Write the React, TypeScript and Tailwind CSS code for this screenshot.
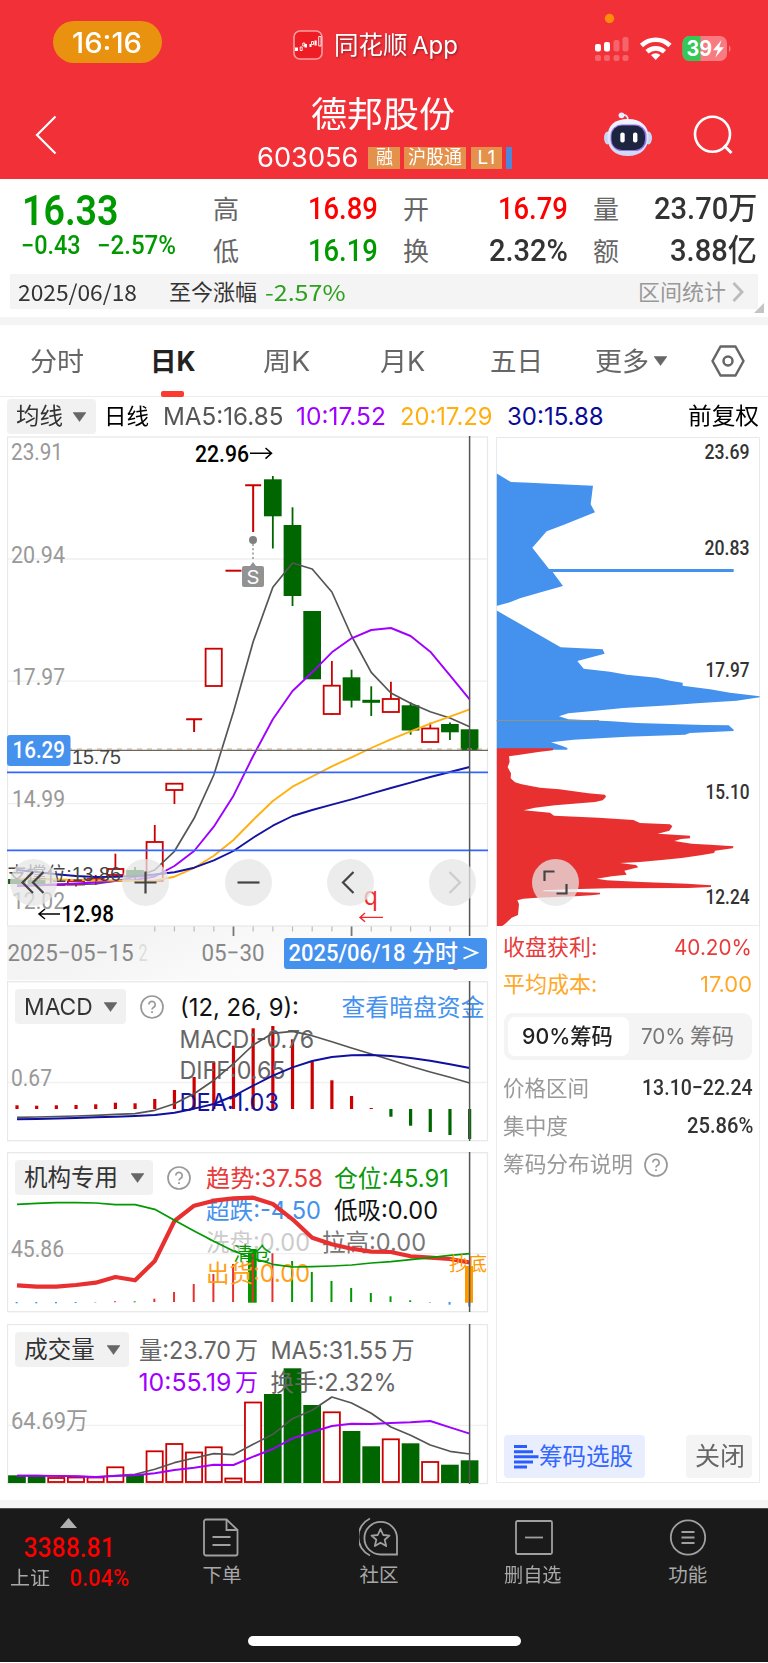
import { useLayoutEffect, useRef, useState } from "react";
import type { ReactNode } from "react";

const GREEN = "#006600";
const RED = "#cc0000";
const BLUE = "#4591ee";
const DIN = "Roboto, 'Noto Sans CJK SC', sans-serif";
const SANS = "Inter, 'Noto Sans CJK SC', sans-serif";

// Squeezes or stretches a label horizontally so it fills exactly w pixels.
const Fit = ({ w, className = "", children }: { w: number; className?: string; children: ReactNode }) => {
  const ref = useRef<HTMLSpanElement>(null);
  const [scale, setScale] = useState(1);
  useLayoutEffect(() => {
    if (ref.current) setScale(w / ref.current.offsetWidth);
  }, [w]);
  return (
    <span className={`block shrink-0 whitespace-nowrap ${className}`} style={{ width: w }}>
      <span ref={ref} className="inline-block origin-left" style={{ transform: `scaleX(${scale})` }}>
        {children}
      </span>
    </span>
  );
};

type TextProps = { x: number; y: number; w: number; size?: number; fill?: string; font?: string; weight?: number; children: string };

const T = ({ x, y, w, size = 24, fill = "#999", font = DIN, weight = 400, children }: TextProps) => (
  <text x={x} y={y} textLength={w} lengthAdjust="spacingAndGlyphs" fontSize={size} fill={fill} fontFamily={font} fontWeight={weight}>
    {children}
  </text>
);

const cx = (i: number) => 17 + 19.68 * i;

const Line = ({ data, color, width = 1.7 }: { data: number[]; color: string; width?: number }) => (
  <polyline points={data.map((y, i) => `${cx(i)},${y}`).join(" ")} fill="none" stroke={color} strokeWidth={width} strokeLinejoin="round" />
);

const Caret = ({ className = "" }: { className?: string }) => (
  <svg viewBox="0 0 13 10" className={`h-[10px] w-[13px] shrink-0 ${className}`}>
    <path d="M0 .5h13L6.500 9.500z" fill="#666" stroke="#666" strokeWidth=".5" strokeLinejoin="round" />
  </svg>
);

const Help = ({ className = "" }: { className?: string }) => (
  <svg viewBox="0 0 24 24" className={`size-6 shrink-0 ${className}`} fill="none" stroke="#999" strokeWidth="1.700">
    <circle cx="12" cy="12" r="11" />
    <path d="M8.800 9.600a3.200 3.200 0 1 1 4.900 2.700c-1.100.7-1.700 1.200-1.700 2.300" />
    <path d="M12 16.300v1.800" strokeWidth="1.800" />
  </svg>
);

// [type, bodyTop, bodyBottom, wickTop, wickBottom]
const candles: [string, number, number, number, number][] = [
  ["g", 879, 884, 879, 884],
  ["g", 879, 884, 878, 885],
  ["r", 884.5, 885, 884, 886],
  ["r", 881, 884.5, 880, 886.5],
  ["r", 879, 880.5, 875, 885],
  ["r", 869, 875, 853.7, 875],
  ["g", 870, 877.5, 867, 880],
  ["r", 842, 881, 825, 881],
  ["r", 783.7, 790, 783, 804],
  ["t", 719.3, 719.3, 719.3, 732],
  ["r", 648.7, 686, 648, 686],
  ["t", 570.7, 570.7, 570.7, 570.7],
  ["t", 485.2, 485.2, 485.2, 532],
  ["g", 479.3, 516.3, 476, 548.5],
  ["g", 525, 596, 507.3, 606],
  ["g", 611, 679.3, 611, 679],
  ["r", 685.7, 714, 661, 715],
  ["g", 677.3, 700.7, 669.7, 707.5],
  ["g", 699.8, 702.8, 686.3, 716],
  ["r", 699, 712, 681.7, 712],
  ["g", 705.3, 730.5, 702.3, 734.7],
  ["r", 728.5, 742, 722.7, 742],
  ["g", 724, 732.3, 722.5, 740],
  ["g", 729.3, 750.3, 729.3, 750.3],
];

const ma5 = [885, 885, 885, 884.5, 884, 881, 877, 870, 851.3, 818.3, 775, 711.7, 641.7, 587.3, 563, 569, 592, 636, 672.3, 693, 703.3, 711.7, 718, 726.7];
const ma10 = [886, 885.5, 884.5, 883.5, 882.5, 881, 880, 876.5, 866, 851, 826.7, 795.7, 756, 719.3, 691, 672.3, 652.3, 638.3, 630, 628, 636, 651.7, 675.3, 699.3];
const ma20 = [878.7, 879, 879.5, 880, 880.3, 880.5, 881, 880.5, 876.7, 868, 855.7, 840, 820, 801, 786.7, 776.5, 766.3, 757.3, 748, 739.3, 731.3, 723.7, 716.7, 709.3];
const ma30 = [870, 872, 874.3, 876, 877, 876.8, 876, 874.5, 872.3, 867.7, 860.3, 851, 837.7, 825.7, 816, 810, 804.7, 799.3, 793.7, 788, 782.7, 777, 772, 767];

const macd = [1105.3, 1105.7, 1105.3, 1105, 1104.3, 1102.7, 1103.3, 1099, 1090, 1077, 1062.3, 1045.7, 1028.3, 1026, 1039.3, 1061.7, 1080.3, 1096, 1108, 1116.7, 1125.7, 1132, 1135, 1139];
const diff = [1117.3, 1117, 1116.5, 1116, 1115.3, 1114.3, 1113.7, 1110.3, 1103.7, 1093.7, 1080.3, 1063.7, 1045, 1033.3, 1031.3, 1035.7, 1041.7, 1048, 1054, 1060, 1066.3, 1072, 1077.3, 1083];
const dea = [1119.3, 1119, 1118.5, 1118, 1117.3, 1116.7, 1116, 1115, 1112.7, 1108.7, 1104, 1096, 1085.7, 1075.7, 1067.3, 1061, 1057, 1055.3, 1055, 1056, 1058, 1060.7, 1064.3, 1068];

const trend = [1285.3, 1286.7, 1286.7, 1285, 1282.7, 1277, 1280.3, 1261, 1221, 1205.7, 1200.7, 1198.3, 1197.7, 1204, 1219.3, 1237.7, 1244.3, 1248.7, 1251.7, 1252, 1256.3, 1257.7, 1259, 1262.5];
const position = [1204.3, 1203.3, 1202.7, 1202.7, 1203, 1204.7, 1204.7, 1209.3, 1220.3, 1231, 1241.3, 1251, 1258.3, 1264.3, 1267, 1266.7, 1266, 1265, 1263, 1261.7, 1259.7, 1257.7, 1255.3, 1253.7];
// [color, y1, y2]
const flows: [string, number, number][] = [
  [BLUE, 1302, 1303.3], [BLUE, 1302, 1303.3], [BLUE, 1302, 1303.3], [BLUE, 1302, 1303], [BLUE, 1302, 1302.5],
  ["#e83030", 1301.3, 1302.3], ["#009900", 1301.3, 1302.3], ["#e83030", 1298.7, 1302], ["#e83030", 1292, 1302],
  ["#e83030", 1284, 1302], ["#e83030", 1274, 1302], ["#e83030", 1264, 1302], ["#e83030", 1254, 1302], ["#e83030", 1253.3, 1302],
  ["#009900", 1261, 1302], ["#009900", 1272, 1302], ["#009900", 1281, 1302], ["#009900", 1288, 1302], ["#009900", 1293, 1302],
  ["#009900", 1296.3, 1302], ["#009900", 1300.3, 1302], [BLUE, 1302, 1302.6], [BLUE, 1302, 1304.7], [BLUE, 1302, 1306.5],
];

const volumes: [string, number][] = [
  ["g", 1475.3], ["g", 1476], ["r", 1478], ["r", 1477.5], ["r", 1477.5], ["r", 1467.3], ["g", 1474], ["r", 1451.3],
  ["r", 1444], ["r", 1452.5], ["r", 1447.3], ["r", 1478.5], ["r", 1402.5], ["g", 1394], ["g", 1368.3], ["g", 1405],
  ["r", 1412.3], ["g", 1431], ["g", 1446.3], ["r", 1439.3], ["g", 1443.3], ["r", 1462], ["g", 1464.7], ["g", 1460.3],
];
const vol5 = [1475.7, 1475.7, 1476, 1476.3, 1477, 1475.7, 1474.3, 1469.3, 1462.7, 1458, 1453.7, 1454.7, 1444.3, 1434.3, 1418.7, 1410.3, 1397, 1403, 1413.3, 1427, 1435.3, 1445, 1451.3, 1454];
const vol10 = [1475.7, 1475.7, 1475.9, 1476.3, 1477, 1476, 1475.3, 1473.3, 1470, 1467.7, 1464.7, 1465, 1456.7, 1449, 1438.3, 1432, 1426, 1423.7, 1424, 1423, 1422.3, 1421, 1427.3, 1433.7];

const StatusBar = () => (
  <div className="flex h-[84px] items-start">
    <div className="mt-[21px] ml-[53px] flex h-[42px] w-[109px] items-center justify-center rounded-[21px] bg-[#e8920f]">
      <Fit w={70} className="mt-px mr-px text-[28px] font-medium leading-none">16:16</Fit>
    </div>
    <svg viewBox="0 0 30 30" className="mt-[30px] ml-[131px] size-[30px]">
      <rect x="1" y="1" width="28" height="28" rx="6" fill="#ee1c24" stroke="#f7a0a3" strokeWidth="1.600" />
      <path d="M2 17.500h3v3.500H2zM11.500 14h2.500v3.500h-2.500zM16.500 14h2v3h-2zM21.500 10.500h2.200v5h-2.200z" fill="#fff" />
      <path d="M7.200 17h2v3.500h-2zM9.800 13h2v3h-2zM18.500 11.500h2v3h-2zM25.700 6.500h2.300v9.500h-2.300z" fill="none" stroke="#fff" strokeWidth=".9" />
    </svg>
    <div className="mt-[30px] ml-[11px] flex gap-[4px] text-[24.500px] leading-[30px] drop-shadow-[1px_1px_1px_rgba(0,0,0,0.4)]">
      <Fit w={74}>同花顺</Fit>
      <Fit w={46}>App</Fit>
    </div>
    <svg viewBox="590 10 145 56" className="mt-[10px] ml-[132px] h-[56px] w-[145px]">
      <circle cx="609.500" cy="18.500" r="4.700" fill="#ff8c0a" />
      <g fill="#fff">
        <rect x="595" y="44" width="6" height="7.500" rx="2" />
        <rect x="604" y="42" width="6" height="9.500" rx="2" />
        <g opacity=".25">
          <rect x="613.500" y="40" width="6" height="11.500" rx="2" />
          <rect x="622.500" y="37" width="6" height="14.500" rx="2" />
          <rect x="595" y="55" width="6" height="6" rx="2" />
          <rect x="604" y="55" width="6" height="6" rx="2" />
          <rect x="613.500" y="55" width="6" height="6" rx="2" />
          <rect x="622.500" y="55" width="6" height="6" rx="2" />
        </g>
      </g>
      <g fill="none" stroke="#fff" strokeWidth="4.600">
        <path d="M641.500 45.500a20.500 20.500 0 0 1 28.500 0" />
        <path d="M647 51.800a13 13 0 0 1 17.500 0" />
      </g>
      <path d="M655.700 60l-4.700-4.900a7 7 0 0 1 9.400 0z" fill="#fff" />
      <rect x="682.500" y="36" width="44.500" height="25" rx="7" fill="#f77b80" />
      <path d="M700.500 36v25h-11a7 7 0 0 1-7-7V43a7 7 0 0 1 7-7z" fill="#34c759" />
      <path d="M729 45.500c2 .8 2 5.800 0 6.600z" fill="#f77b80" />
      <text x="686.500" y="56" fontSize="21" fontWeight="700" fill="#fff" fontFamily={SANS} textLength="25.500" lengthAdjust="spacingAndGlyphs">39</text>
      <path d="M721.500 40l-8.500 10.300h4.800L715.300 57.500l8.700-10.300h-4.800z" fill="#fff" />
    </svg>
  </div>
);

const Header = () => (
  <header className="h-[179px] bg-[#f23038] text-white">
    <StatusBar />
    <div className="flex h-[95px] items-start">
      <svg viewBox="0 0 22 40" className="mt-[31px] ml-[35px] h-10 w-[22px]" fill="none" stroke="#fff" strokeWidth="2.200">
        <path d="M20.500 1.500L2 20l18.500 18.500" />
      </svg>
      <div className="ml-[201px] w-[258px]">
        <Fit w={144} className="mt-[11px] ml-[53px] text-[35.500px] leading-[40px]">德邦股份</Fit>
        <div className="mt-[11px] flex items-center text-[19px] leading-[22px]">
          <Fit w={102} className="mt-[-2px] mr-[9px] ml-[-1px] text-[27.500px] leading-[26px]">603056</Fit>
          <span className="mr-1 flex h-[22px] w-8 justify-center bg-[#e4914b]"><Fit w={17}>融</Fit></span>
          <span className="mr-[5px] flex h-[22px] w-[62px] justify-center bg-[#e4914b]"><Fit w={54}>沪股通</Fit></span>
          <span className="mr-1 flex h-[22px] w-[31px] justify-center bg-[#e4914b]"><Fit w={18}>L1</Fit></span>
          <span className="h-[22px] w-[6px] bg-[#4d87dc]" />
        </div>
      </div>
      <svg viewBox="0 0 50 46" className="mt-[27px] ml-[87px] h-[46px] w-[50px]">
        <defs>
          <linearGradient id="shell" x1="0" x2="0" y1="0" y2="1">
            <stop offset="0" stopColor="#f3f5ff" />
            <stop offset="1" stopColor="#cfd6f5" />
          </linearGradient>
        </defs>
        <path d="M25 9.500c0-5-2.500-6-6-5.500" fill="none" stroke="#dfe5fb" strokeWidth="1.800" />
        <circle cx="18.500" cy="4.300" r="2.900" fill="#e9edff" />
        <ellipse cx="4.500" cy="27" rx="3.500" ry="6.500" fill="#cbd3f3" />
        <ellipse cx="45.500" cy="27" rx="3.500" ry="6.500" fill="#cbd3f3" />
        <path d="M25 8c13 0 20.500 7 20.500 18S38 45 25 45 4.500 38 4.500 26 12 8 25 8z" fill="url(#shell)" />
        <rect x="7.500" y="13.500" width="36" height="26.500" rx="11.500" fill="#8f74ea" />
        <rect x="8.500" y="14.500" width="33.500" height="24.500" rx="10.500" fill="#1c2440" />
        <rect x="17.300" y="21.500" width="4.400" height="10" rx="2" fill="#fff" />
        <rect x="30" y="21.500" width="4.400" height="10" rx="2" fill="#fff" />
      </svg>
      <svg viewBox="0 0 42 42" className="mt-[30px] ml-[38px] size-[42px]" fill="none" stroke="#fff" strokeWidth="2.600">
        <circle cx="21.500" cy="20.200" r="17.500" />
        <path d="M33 31.500l7.500 7.500" strokeWidth="3" />
      </svg>
    </div>
  </header>
);

const Quote = () => (
  <section className="h-[138px] pt-[10px] font-[Roboto,'Noto_Sans_CJK_SC',sans-serif]">
    <div className="flex h-[85px] text-[30.500px] font-medium leading-[40px] text-[#333]">
      <div className="ml-[22px] w-[191px] text-[#009900]">
        <Fit w={96} className="text-[43px] leading-[42px] font-semibold">16.33</Fit>
        <div className="mt-px ml-[-1px] flex gap-4 text-[25px] leading-[28px]">
          <Fit w={60}>−0.43</Fit>
          <Fit w={79}>−2.57%</Fit>
        </div>
      </div>
      <div className="mt-px text-[26px] font-normal text-[#666]">
        <div>高</div>
        <div className="mt-[2px]">低</div>
      </div>
      <div className="ml-[69px] w-[95px]">
        <Fit w={70} className="text-[#ff0000]">16.89</Fit>
        <Fit w={70} className="mt-[2px] text-[#009900]">16.19</Fit>
      </div>
      <div className="mt-px text-[26px] font-normal text-[#666]">
        <div>开</div>
        <div className="mt-[2px]">换</div>
      </div>
      <div className="ml-[60px] w-[104px]">
        <Fit w={70} className="ml-[9px] text-[#ff0000]">16.79</Fit>
        <Fit w={79} className="mt-[2px]">2.32%</Fit>
      </div>
      <div className="mt-px text-[26px] font-normal text-[#666]">
        <div>量</div>
        <div className="mt-[2px]">额</div>
      </div>
      <div className="ml-[35px] w-[104px]">
        <Fit w={103}>23.70万</Fit>
        <Fit w={87} className="mt-[2px] ml-[16px]">3.88亿</Fit>
      </div>
    </div>
    <div className="relative mx-[10px] flex h-[35px] items-center bg-[#f4f4f4] pl-2 font-['Noto_Sans_CJK_SC',sans-serif] text-[22px] leading-[33px] text-[#333]">
      <Fit w={119}>2025/06/18</Fit>
      <Fit w={88} className="mt-[-2px] ml-[32px]">至今涨幅</Fit>
      <Fit w={81} className="ml-[8px] text-[#2da01e]">-2.57%</Fit>
      <Fit w={88} className="mt-[-2px] ml-[292px] text-[#999]">区间统计</Fit>
      <svg viewBox="0 0 12 20" className="ml-[6px] h-5 w-3" fill="none" stroke="#bbb" strokeWidth="2.800">
        <path d="M1.500 1l8.500 9-8.500 9" />
      </svg>
      <span className="absolute right-[-6px] bottom-[-4px] h-[10px] w-[10px] bg-[#c4c4c4] [clip-path:polygon(100%_0,100%_100%,0_100%)]" />
    </div>
  </section>
);

const Tabs = () => (
  <nav className="flex h-[72px] items-center border-b border-[#ececec] text-[26.500px] leading-[72px] text-[#666]">
    <Fit w={54} className="ml-[30px]">分时</Fit>
    <div className="relative ml-[66px]">
      <Fit w={46} className="font-bold text-[#222]">日K</Fit>
      <span className="absolute bottom-0 left-[11px] h-[6px] w-[23px] rounded-[2px] bg-[#fb3a30]" />
    </div>
    <Fit w={47} className="ml-[67px]">周K</Fit>
    <Fit w={45} className="ml-[70px]">月K</Fit>
    <Fit w={53} className="ml-[65px]">五日</Fit>
    <Fit w={54} className="ml-[52px]">更多</Fit>
    <Caret className="ml-[5px]" />
    <svg viewBox="0 0 34 32" className="ml-[44px] h-8 w-[34px]" fill="none" stroke="#666" strokeWidth="2.500">
      <path d="M9.500 1.500h15L32.500 16l-8 14.500h-15L1.500 16z" strokeLinejoin="round" />
      <circle cx="17" cy="16" r="4.500" />
    </svg>
  </nav>
);

const MaRow = () => (
  <div className="flex h-[39px] items-center text-[24px] leading-[39px]">
    <button className="ml-[7px] flex h-[35px] w-[89px] items-center rounded bg-[#f1f1f1] pl-[8px] text-[23px] text-[#333]">
      <Fit w={47}>均线</Fit>
      <Caret className="ml-[11px]" />
    </button>
    <Fit w={45} className="ml-[8px] text-[22px]">日线</Fit>
    <Fit w={120} className="ml-[14px] text-[#555]">MA5:16.85</Fit>
    <Fit w={90} className="ml-[13px] text-[#a000ff]">10:17.52</Fit>
    <Fit w={92} className="ml-[14px] text-[#ffb010]">20:17.29</Fit>
    <Fit w={97} className="ml-[15px] text-[#0a0a99]">30:15.88</Fit>
    <Fit w={71} className="ml-[84px] text-[23px]">前复权</Fit>
  </div>
);

const KLine = () => (
  <svg viewBox="7 436 482 544" className="block h-[544px] w-[482px]">
    <defs>
      <linearGradient id="axis" x1="0" x2="1" y1="0" y2=".25">
        <stop offset="0" stopColor="#f3f3f3" />
        <stop offset=".3" stopColor="#f4f4f4" />
        <stop offset=".6" stopColor="#fafafa" />
        <stop offset="1" stopColor="#fcfcfc" />
      </linearGradient>
    </defs>
    <rect x="7" y="926" width="481" height="54" fill="url(#axis)" />
    <rect x="7.500" y="437" width="480" height="489" fill="#fff" stroke="#e8e8e8" strokeWidth="1.300" />
    <path d="M8 559h479M8 681.200h479M8 803.700h479" stroke="#f0f0f0" strokeWidth="1.300" />
    <T x={11} y={460} w={52}>23.91</T>
    <T x={11} y={562.500} w={54}>20.94</T>
    <T x={12} y={685} w={53}>17.97</T>
    <T x={12} y={806.500} w={53}>14.99</T>
    <T x={12} y={909} w={53}>12.02</T>

    {candles.map(([type, top, bottom, high, low], i) => {
      const x = cx(i);
      if (type === "g") {
        return (
          <g key={i} fill={GREEN}>
            <rect x={x - 8.900} y={top} width="17.700" height={bottom - top} />
            <rect x={x - 0.900} y={high} width="1.800" height={low - high} />
          </g>
        );
      }
      if (type === "t") {
        return <path key={i} d={`M${x - 8} ${top}h16M${x} ${top}V${low}`} stroke={RED} strokeWidth="2" fill="none" />;
      }
      return (
        <g key={i} fill="#fff" stroke={RED} strokeWidth="1.800">
          <path d={`M${x} ${high}V${low}`} />
          <rect x={x - 8.200} y={top} width="16.200" height={bottom - top} />
        </g>
      );
    })}
    <Line data={ma5} color="#555" />
    <Line data={ma10} color="#a000ff" width={1.900} />
    <Line data={ma20} color="#ffb010" width={1.900} />
    <Line data={ma30} color="#1414a0" width={1.900} />

    <path d="M7 749h481" stroke="#d9a86c" strokeDasharray="5 5" />
    <path d="M7 750.400h481" stroke="#666" strokeWidth="1.300" />
    <path d="M7 772.400h481M7 850.400h481" stroke="#3366ff" strokeWidth="1.900" />

    <T x={195} y={462} w={54} fill="#000" weight={500}>22.96</T>
    <path d="M250 453.300h21M265.500 448l6 5.300-6 5.300" stroke="#000" strokeWidth="1.500" fill="none" />
    <circle cx="253" cy="540" r="4" fill="#808080" />
    <path d="M253 544v15" stroke="#999" strokeWidth="1.600" strokeDasharray="2 2.300" />
    <path d="M250 566l3-4 3 4h6a2 2 0 0 1 2 2v17a2 2 0 0 1-2 2h-18a2 2 0 0 1-2-2v-17a2 2 0 0 1 2-2z" fill="#929292" />
    <T x={246.500} y={583.500} w={13} size={19} fill="#fff" font={SANS}>S</T>

    <rect x="7" y="735" width="63.500" height="31" rx="3" fill={BLUE} />
    <T x={12.500} y={757.500} w={52.500} fill="#fff" weight={500}>16.29</T>
    <T x={72} y={764} w={49} size={19.500} fill="#444" font="'Liberation Sans', sans-serif">15.75</T>
    <T x={7} y={881} w={114} size={19.500} fill="#444" font="'Liberation Sans', 'Noto Sans CJK SC', sans-serif">支撑位:13.86</T>
    <path d="M60 914H39M45 909l-6 5 6 5" stroke="#000" strokeWidth="1.500" fill="none" />
    <T x={61.500} y={922} w={52.500} fill="#000" weight={500}>12.98</T>
    <T x={363.500} y={905} w={14.500} size={25} fill="#f02a2a" font="'Noto Sans', sans-serif">q</T>
    <path d="M383 917.400h-23M365 913l-5 4.400 5 4.400" stroke="#f02a2a" strokeWidth="1.400" fill="none" />

    {Array.from({ length: 16 }, (_, k) => k + 7).map((i) =>
      i === 11 || i === 17 ? (
        <path key={i} d={`M${cx(i)} 926.500v9.500`} stroke="#777" strokeWidth="1.800" />
      ) : (
        <path key={i} d={`M${cx(i)} 926.500v5`} stroke="#bbb" strokeWidth="1.200" />
      ),
    )}
    <T x={7.500} y={960.700} w={126} fill="#888">2025−05−15</T>
    <T x={138.500} y={960.700} w={9} fill="#ddd">2</T>
    <T x={201.500} y={960.700} w={63} fill="#888">05−30</T>
    <path d="M469.600 436v500" stroke="#555" strokeWidth="1.500" />
    <path d="M453.500 969.500h4" stroke="#f06060" />
    <rect x="284" y="938" width="203" height="31" rx="3" fill={BLUE} />
    <T x={288.500} y={960.700} w={117} fill="#fff" weight={500}>2025/06/18</T>
    <T x={412} y={961.500} w={46} size={23.500} fill="#fff" weight={500}>分时</T>
    <path d="M463.500 947l13.500 5.800-13.500 5.800" fill="none" stroke="#fff" strokeWidth="1.900" />
  </svg>
);

const Picker = ({ w, textWidth, help, children }: { w: string; textWidth: number; help?: boolean; children: string }) => (
  <div className="absolute top-[8px] left-[8px] flex items-center">
    <button className={`flex h-[35px] items-center rounded bg-[#f1f1f1] pr-[9px] pl-[9px] text-[23.500px] leading-[35px] text-[#333] ${w}`}>
      <Fit w={textWidth}>{children}</Fit>
      <Caret className="ml-auto" />
    </button>
    {help && <Help className="ml-[14px]" />}
  </div>
);

const Macd = () => (
  <div className="relative mt-[1px]">
    <svg viewBox="7 981 482 161" className="block h-[161px] w-[482px]">
      <rect x="7.500" y="981.700" width="480" height="159" fill="#fff" stroke="#e8e8e8" strokeWidth="1.300" />
      <path d="M8 1082.500h479" stroke="#f0f0f0" strokeWidth="1.300" />
      <T x={11} y={1085.500} w={41}>0.67</T>
      {macd.map((y, i) => (
        <path key={i} d={`M${cx(i)} 1109V${y}`} stroke={y > 1109 ? GREEN : RED} strokeWidth="3.200" />
      ))}
      <T x={180} y={1015.500} w={119} fill="#111" font={SANS}>(12, 26, 9):</T>
      <T x={341.500} y={1016} w={143} size={23.500} fill={BLUE} font={SANS}>查看暗盘资金</T>
      <T x={179.500} y={1047.500} w={134.500} fill="#666" font={SANS}>MACD:-0.76</T>
      <T x={179.500} y={1079} w={106} fill="#666" font={SANS}>DIFF:0.65</T>
      <T x={179.500} y={1110.500} w={99.500} fill="#1414a0" font={SANS}>DEA:1.03</T>
      <Line data={diff} color="#555" />
      <Line data={dea} color="#1010a0" width={1.900} />
      <path d="M469.600 981v160" stroke="#555" strokeWidth="1.500" />
    </svg>
    <Picker w="w-[111px]" textWidth={69} help>MACD</Picker>
  </div>
);

const Institution = () => (
  <div className="relative mt-[10px]">
    <svg viewBox="7 1152 482 161" className="block h-[161px] w-[482px]">
      <rect x="7.500" y="1152.700" width="480" height="159" fill="#fff" stroke="#e8e8e8" strokeWidth="1.300" />
      <path d="M8 1253.700h479" stroke="#f0f0f0" strokeWidth="1.300" />
      <T x={11} y={1257} w={53}>45.86</T>
      <rect x="248" y="1249" width="8.700" height="53.700" fill="#009900" />
      <rect x="465" y="1266" width="8" height="36.700" fill="#ff9900" />
      {flows.map(([color, y1, y2], i) => (
        <path key={i} d={`M${cx(i) - 0.4} ${y1}V${y2}`} stroke={color} strokeWidth="2" />
      ))}
      <T x={206} y={1187} w={117} fill="#e83a3a" font={SANS}>趋势:37.58</T>
      <T x={334} y={1187} w={115} fill="#0a990a" font={SANS}>仓位:45.91</T>
      <T x={206} y={1219} w={115} fill={BLUE} font={SANS}>超跌:-4.50</T>
      <T x={334} y={1219} w={104} fill="#111" font={SANS}>低吸:0.00</T>
      <T x={206} y={1251} w={104} fill="#ccc" font={SANS}>洗盘:0.00</T>
      <T x={322} y={1251} w={104} fill="#777" font={SANS}>拉高:0.00</T>
      <T x={206} y={1282} w={104} fill="#ff9f1a" font={SANS}>出货:0.00</T>
      <Line data={trend} color="#e83030" width={4.200} />
      <Line data={position} color="#009900" />
      <T x={233.500} y={1260.500} w={38} size={19} fill="#009900">清仓</T>
      <T x={449} y={1271} w={38} size={19} fill="#ff9900">抄底</T>
      <path d="M469.600 1152v160" stroke="#555" strokeWidth="1.500" />
    </svg>
    <Picker w="w-[138px]" textWidth={94} help>机构专用</Picker>
  </div>
);

const Volume = () => (
  <div className="relative mt-[11px]">
    <svg viewBox="7 1324 482 161" className="block h-[161px] w-[482px]">
      <rect x="7.500" y="1324.500" width="480" height="159" fill="#fff" stroke="#e8e8e8" strokeWidth="1.300" />
      <path d="M8 1425.300h479" stroke="#f0f0f0" strokeWidth="1.300" />
      <T x={11} y={1429} w={77}>64.69万</T>
      {volumes.map(([type, y], i) =>
        type === "g" ? (
          <rect key={i} x={cx(i) - 8.900} y={y} width="17.700" height={1483 - y} fill={GREEN} />
        ) : (
          <rect key={i} x={cx(i) - 8.200} y={y} width="16.200" height={1482 - y} fill="#fff" stroke={RED} strokeWidth="1.800" />
        ),
      )}
      <T x={139} y={1359} w={92} fill="#666" font={SANS}>量:23.70</T>
      <T x={235} y={1359} w={23} fill="#666" font={SANS}>万</T>
      <T x={270.500} y={1359} w={117} fill="#666" font={SANS}>MA5:31.55</T>
      <T x={391.500} y={1359} w={23} fill="#666" font={SANS}>万</T>
      <T x={138.500} y={1390.500} w={93} fill="#a000ff" font={SANS}>10:55.19</T>
      <T x={235} y={1390.500} w={23} fill="#a000ff" font={SANS}>万</T>
      <T x={270.500} y={1390.500} w={126} fill="#666" font={SANS}>换手:2.32%</T>
      <Line data={vol5} color="#555" />
      <Line data={vol10} color="#a000ff" width={1.900} />
      <path d="M469.600 1324v160" stroke="#555" strokeWidth="1.500" />
    </svg>
    <Picker w="w-[114px]" textWidth={71}>成交量</Picker>
  </div>
);

// Chip distribution outlines, drawn at three units per pixel.
const trappedChips =
  "19,130 63,156 120,158 180,161 243,164 309,167 302,223 315,247 220,285 170,304 127,353 177,417 731,417 731,426 188,426 219,468 155,486 90,505 60,517 19,528 19,541 212,652 338,658 344,671 262,693 281,716 360,725 410,734 500,743 540,752 578,758 578,767 660,778 720,788 809,799 809,802 740,812 620,820 540,826 400,834 300,844 235,850 207,859 235,868 365,874 440,879 645,885 716,886 731,899 731,903 600,909 585,914 410,920 250,929 183,937 215,947 232,954 232,959 19,959";
const profitChips =
  "19,955 189,955 189,961 145,966 90,974 57,979 59,995 53,1012 63,1030 62,1045 75,1057 95,1063 150,1073 208,1078 295,1090 345,1094 348,1101 338,1111 315,1116 195,1126 135,1133 101,1141 180,1148 192,1157 325,1163 430,1170 450,1179 540,1183 547,1189 538,1202 503,1211 600,1217 600,1225 573,1227 553,1233 605,1241 660,1244 731,1249 728,1255 675,1262 672,1269 632,1276 575,1284 515,1290 450,1296 390,1299 438,1305 445,1312 403,1322 410,1334 365,1339 320,1346 350,1351 455,1356 590,1361 663,1366 663,1371 595,1374 355,1375 240,1378 160,1381 160,1384 330,1388 330,1393 305,1396 255,1399 140,1403 100,1406 82,1411 87,1422 84,1455 65,1463 45,1482 35,1489 19,1489";

const ChipChart = () => (
  <svg viewBox="496 437 264 489" className="block h-[489px] w-[264px]">
    <path d="M496 437.500H759.500V926M496 925.700h263" fill="none" stroke="#e8e8e8" />
    <g transform="translate(490 430) scale(.33333)">
      <polygon points={trappedChips} fill={BLUE} />
      <polygon points={profitChips} fill="#e83030" />
    </g>
    <path d="M496.500 437V926" stroke="#e0e6ee" strokeWidth=".8" />
    <path d="M496.500 720.500H599" stroke="#8e948a" strokeWidth="1" />
    {[
      ["23.69", 459, 704.500],
      ["20.83", 555, 704.500],
      ["17.97", 677.300, 705.500],
      ["15.10", 799.300, 705.500],
      ["12.24", 904.300, 705.500],
    ].map(([label, y, x]) => (
      <T key={label} x={x as number} y={y as number} w={749.500 - (x as number)} size={20} fill="#333" weight={500}>
        {label as string}
      </T>
    ))}
  </svg>
);

const ChipPanel = () => (
  <aside className="mt-px ml-[7px] flex h-[1046px] w-[264px] flex-col">
    <ChipChart />
    <div className="flex flex-1 flex-col border-x border-b border-[#ececec] px-[7px] text-[22px]">
      <div className="mt-[3px] flex h-[37px] items-center justify-between text-[#e83a3a]">
        <Fit w={94} className="ml-[-1px]">收盘获利:</Fit>
        <Fit w={78} className="text-[21.500px]">40.20%</Fit>
      </div>
      <div className="flex h-[37px] items-center justify-between text-[#ffa726]">
        <Fit w={94} className="ml-[-1px]">平均成本:</Fit>
        <Fit w={52} className="text-[21.500px]">17.00</Fit>
      </div>
      <div className="mt-[10px] flex h-[47px] items-center rounded-[9px] bg-[#f4f4f4] p-1">
        <div className="flex h-[39px] w-[121px] items-center justify-center rounded-[7px] bg-white">
          <Fit w={91} className="mr-[3px] font-medium text-[#222]">90%筹码</Fit>
        </div>
        <div className="ml-[12px] flex gap-[4px] text-[#777]">
          <Fit w={45}>70%</Fit>
          <Fit w={44}>筹码</Fit>
        </div>
      </div>
      <div className="mt-[10px] flex h-[37px] items-center justify-between text-[#999]">
        <Fit w={86} className="ml-[-1px]">价格区间</Fit>
        <Fit w={111} className="mr-[-1px] mt-[-2px] font-[Roboto,sans-serif] font-medium text-[#333]">13.10−22.24</Fit>
      </div>
      <div className="flex h-[38px] items-center justify-between text-[#999]">
        <Fit w={65} className="ml-[-1px]">集中度</Fit>
        <Fit w={66} className="mr-[-1px] mt-[-2px] font-[Roboto,sans-serif] font-medium text-[#333]">25.86%</Fit>
      </div>
      <div className="flex h-[39px] items-center text-[#999]">
        <Fit w={130} className="ml-[-1px]">筹码分布说明</Fit>
        <Help className="ml-[11px]" />
      </div>
      <div className="mt-auto mb-[4px] flex justify-between">
        <button className="flex h-[43px] w-[141px] items-center rounded bg-[#e9eeff] pl-[10px] text-[#3366ff]">
          <svg viewBox="0 0 25 24" className="h-6 w-[25px]" fill="#2b5cff">
            <path d="M0 0h13v3H0zM0 5.200h19v3H0zM0 10.300h24.500v3H0zM0 15.500h19v3H0zM0 20.600h13v3H0z" />
          </svg>
          <Fit w={94} className="text-[23.500px]">筹码选股</Fit>
        </button>
        <button className="flex h-[43px] w-[66px] items-center justify-center rounded bg-[#f4f4f4] text-[#666]">
          <Fit w={50} className="text-[24.500px]">关闭</Fit>
        </button>
      </div>
    </div>
  </aside>
);

const controls = [
  { d: "M17 7L6.500 17.500 17 28M27.500 7L17 17.500 27.500 28", box: "ml-[10px]", stroke: "#444" },
  { d: "M17.500 6.500v22M6.500 17.500h22", box: "ml-[65px]", stroke: "#444" },
  { d: "M6.500 17.500h22", box: "ml-[56px]", stroke: "#444" },
  { d: "M20.500 7L10 17.500 20.500 28", box: "ml-[55px]", stroke: "#444" },
  { d: "M14.500 7L25 17.500 14.500 28", box: "ml-[55px]", stroke: "#ccc" },
  { d: "M16.500 6.500h-10V16M18.500 28.500h10V19", box: "ml-[56px]", stroke: "#444" },
];

const ChartControls = () => (
  <div className="absolute top-[423px] left-0 flex">
    {controls.map(({ d, box, stroke }) => (
      <button key={d} className={`flex size-[47px] items-center justify-center rounded-full bg-[#e5e5e5]/75 ${box}`}>
        <svg viewBox="0 0 35 35" className="size-[35px]" fill="none" stroke={stroke} strokeWidth="2.200">
          <path d={d} />
        </svg>
      </button>
    ))}
  </div>
);

const Charts = () => (
  <section className="relative flex h-[1064px] pl-[7px]">
    <div className="w-[482px]">
      <KLine />
      <Macd />
      <Institution />
      <Volume />
    </div>
    <ChipPanel />
    <ChartControls />
  </section>
);

const navItems = [
  {
    label: "下单",
    w: 39,
    box: "w-[157px]",
    icon: (
      <>
        <path d="M2 4.500a2 2 0 0 1 2-2h20.500L35.500 13v23.500a2 2 0 0 1-2 2H4a2 2 0 0 1-2-2z" />
        <path d="M24.500 2.500V13h11M10.500 20h18M10.500 28h18" />
      </>
    ),
  },
  {
    label: "社区",
    w: 39,
    box: "w-[158px]",
    icon: (
      <>
        <path d="M38 37.500V21a16.300 16.300 0 1 0-16.500 16.500zM11 1.500a20.500 20.500 0 0 0 0 37" />
        <path d="M21.500 12l2.700 6 6.300.6-4.800 4.200 1.500 6.300-5.700-3.400-5.700 3.400 1.500-6.300-4.800-4.200 6.300-.6z" strokeLinejoin="round" />
      </>
    ),
  },
  {
    label: "删自选",
    w: 58,
    box: "w-[150px]",
    icon: (
      <>
        <rect x="3" y="4" width="36" height="33" rx="1.500" />
        <path d="M12 20.500h18" />
      </>
    ),
  },
  {
    label: "功能",
    w: 39,
    box: "w-[161px]",
    icon: (
      <>
        <circle cx="20" cy="20.500" r="17.200" />
        <path d="M13.500 15h13M13.500 20.500h13M13.500 26h13" />
      </>
    ),
  },
];

const BottomNav = () => (
  <footer className="h-[154px] border-t border-[#4a4a4a] bg-[#1a1a1a] text-[#a8a8a8]">
    <div className="flex h-[90px]">
      <div className="w-[144px] pt-[9px] font-[Roboto,'Noto_Sans_CJK_SC',sans-serif]">
        <div className="ml-[60px] h-[10px] w-[17px] bg-[#b0b0b0] [clip-path:polygon(50%_0,100%_100%,0_100%)]" />
        <Fit w={91} className="mt-[4px] ml-[24px] text-[28px] font-medium leading-[32px] text-[#ff0000]">3388.81</Fit>
        <div className="mt-[-1px] flex text-[23px] leading-[32px] text-[#ff0000]">
          <Fit w={40} className="ml-[10px] text-[19.500px] text-[#a8a8a8]">上证</Fit>
          <Fit w={60} className="ml-[20px] font-medium">0.04%</Fit>
        </div>
      </div>
      {navItems.map(({ label, w, box, icon }) => (
        <div key={label} className={`flex flex-col items-center pt-[8px] ${box}`}>
          <svg viewBox="0 0 40 40" className="size-10 shrink-0" fill="none" stroke="#a0a0a0" strokeWidth="1.800">
            {icon}
          </svg>
          <Fit w={w} className="mt-[5px] text-[19.500px] leading-[26px]">{label}</Fit>
        </div>
      ))}
    </div>
    <div className="mx-auto mt-[37px] h-[10px] w-[273px] rounded-full bg-white" />
  </footer>
);

export default function App() {
  return (
    <div className="w-[768px] overflow-hidden bg-white font-[Inter,'Noto_Sans_CJK_SC',sans-serif] text-black">
      <Header />
      <Quote />
      <div className="h-2 bg-[#f4f4f4]" />
      <Tabs />
      <MaRow />
      <Charts />
      <div className="h-2 bg-[#f4f4f4]" />
      <BottomNav />
    </div>
  );
}
